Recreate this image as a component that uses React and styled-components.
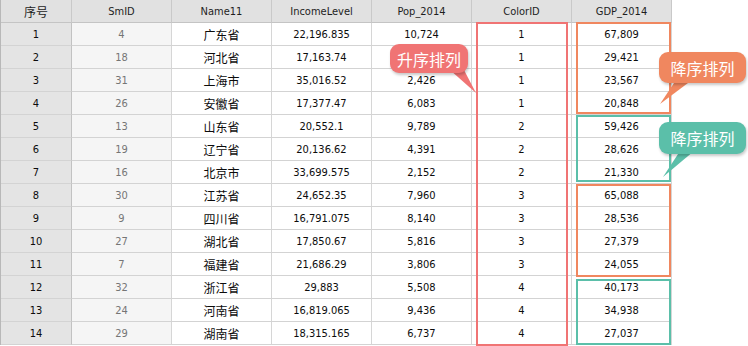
import React from "react";
import styled, { createGlobalStyle } from "styled-components";

const GlobalStyle = createGlobalStyle`
  html, body {
    margin: 0;
    padding: 0;
    background: #ffffff;
  }
`;

const columns = [
  { key: "no", title: "序号", width: 71 },
  { key: "smid", title: "SmID", width: 100 },
  { key: "name", title: "Name11", width: 100 },
  { key: "income", title: "IncomeLevel", width: 100 },
  { key: "pop", title: "Pop_2014", width: 100 },
  { key: "color", title: "ColorID", width: 100 },
  { key: "gdp", title: "GDP_2014", width: 100 }
];

const rows = [
  [4, "广东省", "22,196.835", "10,724", 1, "67,809"],
  [18, "河北省", "17,163.74", "", 1, "29,421"],
  [31, "上海市", "35,016.52", "2,426", 1, "23,567"],
  [26, "安徽省", "17,377.47", "6,083", 1, "20,848"],
  [13, "山东省", "20,552.1", "9,789", 2, "59,426"],
  [19, "辽宁省", "20,136.62", "4,391", 2, "28,626"],
  [16, "北京市", "33,699.575", "2,152", 2, "21,330"],
  [30, "江苏省", "24,652.35", "7,960", 3, "65,088"],
  [9, "四川省", "16,791.075", "8,140", 3, "28,536"],
  [27, "湖北省", "17,850.67", "5,816", 3, "27,379"],
  [7, "福建省", "21,686.29", "3,806", 3, "24,055"],
  [32, "浙江省", "29,883", "5,508", 4, "40,173"],
  [24, "河南省", "16,819.065", "9,436", 4, "34,938"],
  [29, "湖南省", "18,315.165", "6,737", 4, "27,037"]
];

// groups highlighted inside the GDP column
const groups = [
  { top: 22, height: 92, color: "#f0875f" },
  { top: 115, height: 67, color: "#5bbfa9" },
  { top: 184, height: 93, color: "#f0875f" },
  { top: 279, height: 66, color: "#5bbfa9" }
];

const Page = styled.div`
  position: relative;
  width: 748px;
  height: 346px;
  overflow: hidden;
  font-family: "DejaVu Sans Condensed", "Liberation Sans", "Noto Sans CJK SC", sans-serif;
  font-size: 11px;
  color: #000;
`;

const Grid = styled.div`
  display: grid;
  grid-template-columns: ${(p) => p.$cols};
  border-left: 1px solid #b8b8b8;
  width: max-content;
`;

const HeadCell = styled.div`
  height: 23px;
  box-sizing: border-box;
  display: flex;
  align-items: center;
  justify-content: center;
  background: #e1e1e1;
  border-right: 1px solid #c9c9c9;
  border-bottom: 1px solid #c4c4c4;
  color: #1e1e1e;
  font-family: ${(p) =>
    p.$cjk
      ? `"Noto Sans CJK SC", sans-serif`
      : `"DejaVu Sans Condensed", "Liberation Sans", sans-serif`};
  font-size: ${(p) => (p.$cjk ? "12px" : "11px")};
`;

const Cell = styled.div`
  height: 23px;
  box-sizing: border-box;
  display: flex;
  align-items: center;
  justify-content: center;
  border-right: 1px solid ${(p) => (p.$kind === "no" ? "#c2c2c2" : "#d6d6d6")};
  border-bottom: 1px solid #d3d3d3;
  background: ${(p) =>
    p.$kind === "no" ? "#e4e4e4" : p.$kind === "smid" ? "#f5f5f5" : "#ffffff"};
  color: ${(p) => (p.$kind === "smid" ? "#757575" : "#0c0c0c")};
  font-family: ${(p) =>
    p.$kind === "name"
      ? `"Noto Sans CJK SC", sans-serif`
      : `"DejaVu Sans Condensed", "Liberation Sans", sans-serif`};
  font-size: ${(p) => (p.$kind === "name" ? "12px" : "11px")};
`;

const Frame = styled.div`
  position: absolute;
  box-sizing: border-box;
  border: 2px solid ${(p) => p.$color};
  pointer-events: none;
`;

const Bubble = styled.div`
  position: absolute;
  box-sizing: border-box;
  display: flex;
  align-items: center;
  justify-content: center;
  background: ${(p) => p.$color};
  border-radius: 9px;
  color: #ffffff;
  font-family: "Noto Sans CJK SC", sans-serif;
  font-size: 16px;
  letter-spacing: 0px;
  box-shadow: 1px 2px 3px rgba(0, 0, 0, 0.22);
  z-index: 2;
`;

const Tail = styled.svg`
  position: absolute;
  left: 0;
  top: 0;
  overflow: visible;
  z-index: 2;
`;

function Callout({ text, color, left, top, width, height, tail }) {
  return (
    <>
      <Tail width="748" height="346">
        <polygon points={tail} fill={color} />
      </Tail>
      <Bubble $color={color} style={{ left, top, width, height }}>
        {text}
      </Bubble>
    </>
  );
}

const keys = ["smid", "name", "income", "pop", "color", "gdp"];

export default function App() {
  return (
    <Page>
      <GlobalStyle />
      <Grid $cols={columns.map((c) => `${c.width}px`).join(" ")}>
        {columns.map((c) => (
          <HeadCell key={c.key} $cjk={c.key === "no"}>
            {c.title}
          </HeadCell>
        ))}
        {rows.map((r, i) => (
          <React.Fragment key={i}>
            <Cell $kind="no">{i + 1}</Cell>
            {r.map((v, j) => (
              <Cell key={j} $kind={keys[j]}>
                {v}
              </Cell>
            ))}
          </React.Fragment>
        ))}
      </Grid>

      <Frame $color="#f07474" style={{ left: 476, top: 22, width: 92, height: 324 }} />
      {groups.map((g, i) => (
        <Frame
          key={i}
          $color={g.color}
          style={{ left: 576, top: g.top, width: 95, height: g.height }}
        />
      ))}

      <Callout
        text="升序排列"
        color="#f07474"
        left={390}
        top={44}
        width={78}
        height={29}
        tail="450,70 464,70 476,93"
      />
      <Callout
        text="降序排列"
        color="#f0875f"
        left={659}
        top={52}
        width={87}
        height={31}
        tail="676,80 692,80 660,104"
      />
      <Callout
        text="降序排列"
        color="#5bbfa9"
        left={659}
        top={122}
        width={87}
        height={32}
        tail="680,151 694,151 663,177"
      />
    </Page>
  );
}
